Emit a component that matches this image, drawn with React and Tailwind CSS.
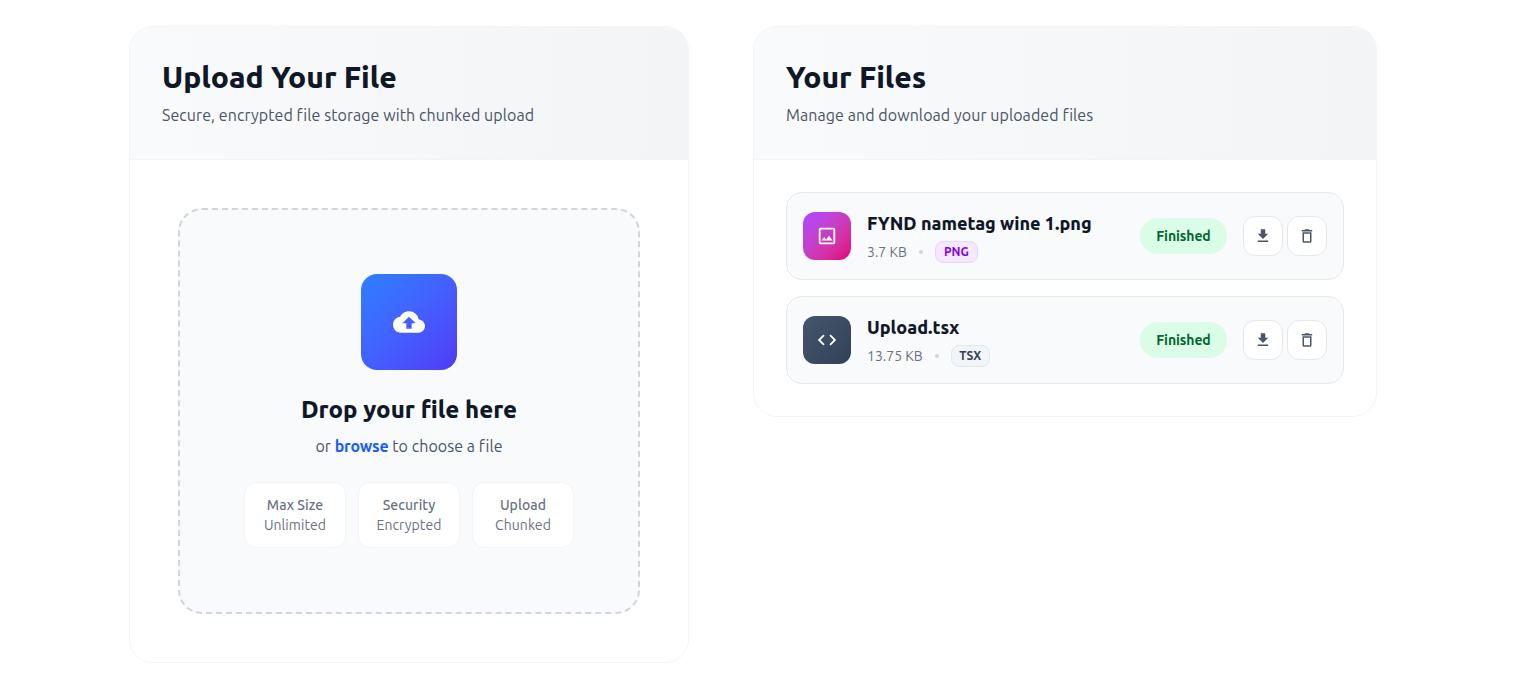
import { MdCloudUpload, MdCode, MdDeleteOutline, MdFileDownload, MdOutlineImage } from "react-icons/md";

const files = [
  {
    name: "FYND nametag wine 1.png",
    size: "3.7 KB",
    type: "PNG",
    Icon: MdOutlineImage,
    tile: "bg-linear-to-br from-purple-500 to-pink-600",
    badge: "w-[43px] border-purple-200 bg-purple-100 text-purple-700",
  },
  {
    name: "Upload.tsx",
    size: "13.75 KB",
    type: "TSX",
    Icon: MdCode,
    tile: "bg-linear-to-br from-slate-600 to-slate-700",
    badge: "w-[39px] border-slate-200 bg-slate-100 text-slate-700",
  },
];

const facts = [
  ["Max Size", "Unlimited"],
  ["Security", "Encrypted"],
  ["Upload", "Chunked"],
];

function Panel({ title, subtitle, children }) {
  return (
    <section className="overflow-hidden rounded-3xl border border-gray-100 bg-white">
      <header className="h-[133px] border-b border-gray-100 bg-linear-to-r from-gray-50 to-gray-100 p-8 whitespace-nowrap">
        <h2 className="mb-2 text-3xl font-extrabold text-gray-900">{title}</h2>
        <p className="text-base tracking-[0.07px] text-gray-600">{subtitle}</p>
      </header>
      {children}
    </section>
  );
}

function ActionButton({ Icon, label }) {
  return (
    <button aria-label={label} className="flex size-10 items-center justify-center rounded-xl border border-gray-200 bg-white text-gray-600">
      <Icon size={18} />
    </button>
  );
}

function FileRow({ file }) {
  const { Icon } = file;
  return (
    <li className="flex h-[88px] items-center rounded-2xl border border-gray-200 bg-gray-50 px-4 whitespace-nowrap">
      <div className={"flex size-12 items-center justify-center rounded-xl text-white " + file.tile}>
        <Icon size={22} />
      </div>
      <div className="ml-4 flex-1">
        <h3 className="mb-1 text-lg leading-7 font-extrabold text-gray-900">{file.name}</h3>
        <div className="flex items-center gap-3 text-sm text-gray-500">
          <span>{file.size}</span>
          <span className="size-1 rounded-full bg-gray-300" />
          <span className={"flex h-[22px] items-center justify-center rounded-lg border text-xs font-semibold tracking-[-0.1px] " + file.badge}>{file.type}</span>
        </div>
      </div>
      <span className="mr-4 flex h-9 w-[87px] items-center justify-center rounded-full bg-green-100 text-sm font-semibold tracking-[-0.1px] text-green-800">Finished</span>
      <div className="flex gap-1">
        <ActionButton Icon={MdFileDownload} label="Download" />
        <ActionButton Icon={MdDeleteOutline} label="Delete" />
      </div>
    </li>
  );
}

export default function App() {
  return (
    <main className="min-h-screen bg-white pt-[26px] pl-[129px] font-['Ubuntu','Noto_Sans',sans-serif]">
      <div className="grid grid-cols-[560px_624px] items-start gap-16">
        <Panel title="Upload Your File" subtitle="Secure, encrypted file storage with chunked upload">
          <div className="p-12">
            <div className="flex h-[406px] flex-col items-center rounded-3xl border-2 border-dashed border-gray-300 bg-gray-50 pt-16 whitespace-nowrap">
              <div className="mb-6 flex size-24 items-center justify-center rounded-2xl bg-linear-to-br from-blue-500 to-indigo-600 text-white">
                <MdCloudUpload size={32} />
              </div>
              <h3 className="mb-2 text-2xl leading-8 font-extrabold text-gray-900">Drop your file here</h3>
              <p className="mb-6 text-base tracking-[0.05px] text-gray-600">
                or <a className="font-semibold tracking-[-0.15px] text-blue-600">browse</a> to choose a file
              </p>
              <div className="grid grid-cols-3 gap-3">
                {facts.map(([label, value]) => (
                  <div key={label} className="flex h-[66px] w-[102px] flex-col items-center justify-center rounded-xl border border-gray-100 bg-white text-sm tracking-[0.07px] text-gray-500">
                    <span className="font-medium">{label}</span>
                    <span>{value}</span>
                  </div>
                ))}
              </div>
            </div>
          </div>
        </Panel>
        <Panel title="Your Files" subtitle="Manage and download your uploaded files">
          <ul className="flex flex-col gap-4 p-8">
            {files.map((file) => (
              <FileRow key={file.name} file={file} />
            ))}
          </ul>
        </Panel>
      </div>
    </main>
  );
}
